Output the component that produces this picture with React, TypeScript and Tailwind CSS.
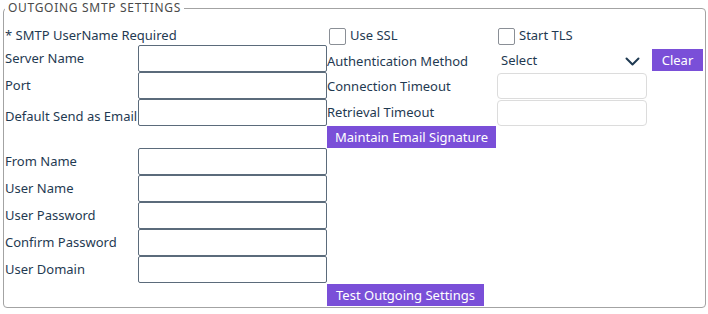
import React from "react";

const font = { fontFamily: '"Noto Sans", "Open Sans", sans-serif' };

const Label = ({ text, className = "" }: { text: string; className?: string }) => (
  <div className={"text-[13px] leading-none text-[#1f3a52] whitespace-nowrap " + className}>{text}</div>
);

const DarkInput = () => (
  <input className="w-[189px] h-[27px] border-[1.5px] border-[#5b6b7b] rounded-[2px] bg-white outline-none" />
);

const LightInput = () => (
  <input className="w-[150px] h-[26px] border border-[#dcdcdc] rounded-[4px] bg-white outline-none" />
);

const Check = ({ text }: { text: string }) => (
  <label className="flex items-center gap-[4px] text-[13px] text-[#1f3a52]">
    <span className="w-[17px] h-[17px] border border-[#8a8f96] rounded-[2px] bg-white" />
    {text}
  </label>
);

const PurpleBtn = ({ text, className = "" }: { text: string; className?: string }) => (
  <button className={"bg-[#7a4fd8] text-white text-[13px] leading-none h-[22px] " + className}>{text}</button>
);

const App = () => {
  const lower = [
    "From Name",
    "User Name",
    "User Password",
    "Confirm Password",
    "User Domain",
  ];

  return (
    <div className="w-[708px] h-[314px] bg-white pl-[3px] pt-px" style={font}>
      <fieldset className="w-[703px] h-[307px] border border-[#a3a3a3] rounded-[4px] pl-px pt-[10px]">
        <legend className="ml-0 px-[3px] text-[12px] leading-[14px] text-[#4a4a4a] tracking-[0.7px]">
          OUTGOING SMTP SETTINGS
        </legend>
        <div className="grid grid-cols-[133px_189px_170px_155px_52px] grid-rows-[20px_27px_27px_27px_22px_27px_27px_27px_27px_27px_23px] items-center">
          {/* row 1 */}
          <Label text="* SMTP UserName Required" className="col-span-2" />
          <div className="pl-[2px] pt-[2px]"><Check text="Use SSL" /></div>
          <div className="pl-px pt-[2px] col-span-2"><Check text="Start TLS" /></div>

          {/* row 2 */}
          <Label text="Server Name" />
          <DarkInput />
          <Label text="Authentication Method" className="pt-[5px]" />
          <div className="flex items-center justify-between pl-[4px] pr-[12px] pt-[5px] text-[13px] text-[#1f3a52]">
            <span>Select</span>
            <svg width="15" height="9" viewBox="0 0 15 9" fill="none">
              <path d="M1.5 1.5 L7.5 7.5 L13.5 1.5" stroke="#1f3a52" strokeWidth="2" strokeLinecap="round" strokeLinejoin="round" />
            </svg>
          </div>
          <PurpleBtn text="Clear" className="w-[51px] h-[21px] self-end mb-px" />

          {/* row 3 */}
          <Label text="Port" />
          <DarkInput />
          <Label text="Connection Timeout" className="pt-px" />
          <div className="self-start pt-px"><LightInput /></div>
          <div />

          {/* row 4 */}
          <Label text="Default Send as Email" className="self-end pb-[3px]" />
          <DarkInput />
          <Label text="Retrieval Timeout" />
          <div className="self-start pt-px"><LightInput /></div>
          <div />

          {/* row 5 */}
          <div className="col-span-2" />
          <PurpleBtn text="Maintain Email Signature" className="w-[169px]" />
          <div className="col-span-2" />

          {/* rows 6-10 */}
          {lower.map((t) => (
            <React.Fragment key={t}>
              <Label text={t} />
              <DarkInput />
              <div className="col-span-3" />
            </React.Fragment>
          ))}

          {/* row 11 */}
          <div className="col-span-2" />
          <PurpleBtn text="Test Outgoing Settings" className="w-[157px] self-end" />
        </div>
      </fieldset>
    </div>
  );
};

export default App;
